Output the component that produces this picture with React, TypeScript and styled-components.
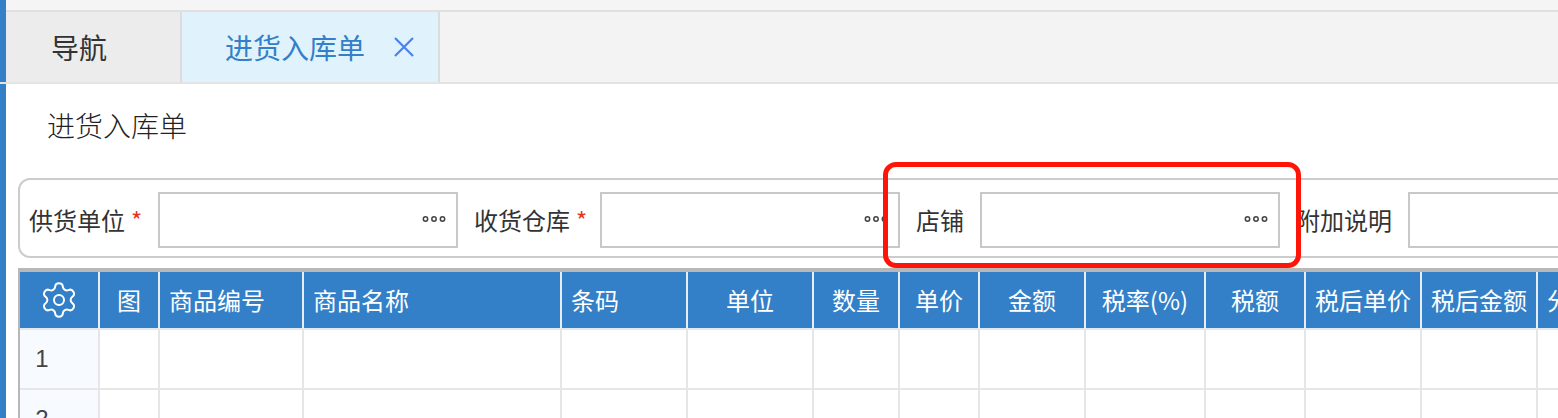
import React from 'react';
import styled, { createGlobalStyle } from 'styled-components';
import { Settings } from 'lucide-react';

const GlobalStyle = createGlobalStyle`
  html, body {
    margin: 0;
    padding: 0;
    background: #fff;
    overflow: hidden;
  }
  body {
    font-family: "Noto Sans CJK SC", "Liberation Sans", sans-serif;
    color: #333;
  }
  * { box-sizing: border-box; }
`;

const Page = styled.div`
  position: relative;
  width: 1558px;
  height: 418px;
  overflow: hidden;
`;

const HeaderArea = styled.header`
  display: flex;
  height: 82px;
`;

const Stripe = styled.div`
  flex: 0 0 6px;
  background: #3380c8;
`;

const HeaderColumn = styled.div`
  flex: 1;
  display: flex;
  flex-direction: column;
`;

const TopStrip = styled.div`
  height: 12px;
  background: #f5f5f5;
  border-bottom: 2px solid #e0e0e0;
`;

const TabRow = styled.nav`
  flex: 1;
  display: flex;
  background: #f3f3f3;
`;

const NavTab = styled.div`
  width: 176px;
  padding-left: 45px;
  display: flex;
  align-items: center;
  background: #ececec;
  border-right: 2px solid #dcdcdc;
  font-size: 28px;
  line-height: 1;
`;

const ActiveTab = styled.div`
  width: 258px;
  padding-left: 43px;
  display: flex;
  align-items: center;
  background: #e0f3fc;
  border-right: 2px solid #dcdcdc;
  color: #3380c8;
  font-size: 28px;
  line-height: 1;
`;

const CloseIcon = styled.svg`
  margin-left: 29px;
`;

const Divider = styled.div`
  height: 2px;
  background: #e4e4e4;
`;

const BodyArea = styled.div`
  display: flex;
  height: 334px;
`;

const Content = styled.main`
  flex: 1;
  min-width: 0;
  padding: 0 0 0 12px;
  overflow: hidden;
`;

const Title = styled.h1`
  margin: 0;
  height: 94px;
  padding: 24px 0 0 29px;
  font-size: 28px;
  line-height: 34px;
  font-weight: 300;
  color: #222;
`;

const FilterPanel = styled.section`
  width: 1600px;
  height: 80px;
  display: flex;
  align-items: center;
  padding: 4px 0 0 9px;
  border: 2px solid #ccc;
  border-radius: 12px;
`;

const Label = styled.label<{ $width: number }>`
  flex: 0 0 ${({ $width }) => $width}px;
  font-size: 24px;
  line-height: 1;
  white-space: nowrap;
`;

const Star = styled.span`
  margin-left: 6px;
  color: #e8341c;
`;

const Field = styled.div`
  flex: 0 0 300px;
  height: 56px;
  margin-right: 16px;
  padding-right: 10px;
  display: flex;
  align-items: center;
  justify-content: flex-end;
  border: 2px solid #c8c8c8;
  background: #fff;
`;

const Dots = styled.svg`
  margin-top: -2px;
`;

const MoreDots = () => (
  <Dots width="24" height="8" viewBox="0 0 24 8" fill="none" stroke="#444" strokeWidth="1.5">
    <circle cx="3.5" cy="4" r="2.2" />
    <circle cx="12" cy="4" r="2.2" />
    <circle cx="20.5" cy="4" r="2.2" />
  </Dots>
);

const Table = styled.div`
  width: 1600px;
  margin-top: 10px;
  border-top: 4px solid #b8b8b8;
  border-left: 2px solid #b8b8b8;
`;

const columns = [
  { label: '', width: 80, align: 'center' },
  { label: '图', width: 60, align: 'center' },
  { label: '商品编号', width: 144, align: 'left' },
  { label: '商品名称', width: 258, align: 'left' },
  { label: '条码', width: 126, align: 'left' },
  { label: '单位', width: 126, align: 'center' },
  { label: '数量', width: 86, align: 'center' },
  { label: '单价', width: 80, align: 'center' },
  { label: '金额', width: 106, align: 'center' },
  { label: '税率(%)', width: 120, align: 'center' },
  { label: '税额', width: 100, align: 'center' },
  { label: '税后单价', width: 116, align: 'center' },
  { label: '税后金额', width: 116, align: 'center' },
  { label: '分类', width: 120, align: 'left' },
];

const Row = styled.div<{ $height: number }>`
  display: flex;
  height: ${({ $height }) => $height}px;
`;

const HeadCell = styled.div<{ $width: number; $align: string }>`
  flex: 0 0 ${({ $width }) => $width}px;
  display: flex;
  align-items: center;
  justify-content: ${({ $align }) => ($align === 'left' ? 'flex-start' : 'center')};
  padding: ${({ $align }) => ($align === 'left' ? '0 0 0 9px' : '0')};
  background: #3380c8;
  border-right: 2px solid #e8eef5;
  border-bottom: 2px solid #e2e8ef;
  color: #fff;
  font-size: 24px;
  line-height: 1;
  white-space: nowrap;
`;

const Cell = styled.div<{ $width: number; $index?: boolean }>`
  flex: 0 0 ${({ $width }) => $width}px;
  display: flex;
  align-items: center;
  justify-content: center;
  background: ${({ $index }) => ($index ? '#f7fbff' : '#fff')};
  border-right: 2px solid #e6e6e6;
  border-bottom: 2px solid #e6e6e6;
  font-family: "Liberation Sans", sans-serif;
  font-size: 24px;
  line-height: 1;
  color: #444;
`;

const IndexNumber = styled.span`
  margin-right: 34px;
`;

const Highlight = styled.div`
  position: absolute;
  left: 883px;
  top: 162px;
  width: 418px;
  height: 106px;
  border: 5px solid #ff1408;
  border-radius: 13px;
`;

export default function App() {
  return (
    <Page>
      <GlobalStyle />
      <HeaderArea>
        <Stripe />
        <HeaderColumn>
          <TopStrip />
          <TabRow>
            <NavTab>导航</NavTab>
            <ActiveTab>
              进货入库单
              <CloseIcon width="20" height="20" viewBox="0 0 20 20" fill="none" stroke="#4a80f0" strokeWidth="2.2">
                <path d="M1 1L19 19M19 1L1 19" />
              </CloseIcon>
            </ActiveTab>
          </TabRow>
        </HeaderColumn>
      </HeaderArea>
      <Divider />
      <BodyArea>
        <Stripe />
        <Content>
          <Title>进货入库单</Title>
          <FilterPanel>
            <Label $width={129}>供货单位<Star>*</Star></Label>
            <Field><MoreDots /></Field>
            <Label $width={126}>收货仓库<Star>*</Star></Label>
            <Field><MoreDots /></Field>
            <Label $width={64}>店铺</Label>
            <Field><MoreDots /></Field>
            <Label $width={112}>附加说明</Label>
            <Field />
          </FilterPanel>
          <Table>
            <Row $height={58}>
              {columns.map((col, i) => (
                <HeadCell key={i} $width={col.width} $align={col.align}>
                  {i === 0 ? <Settings size={40} strokeWidth={1.2} /> : col.label}
                </HeadCell>
              ))}
            </Row>
            {[1, 2].map((n) => (
              <Row key={n} $height={60}>
                {columns.map((col, i) => (
                  <Cell key={i} $width={col.width} $index={i === 0}>
                    {i === 0 && <IndexNumber>{n}</IndexNumber>}
                  </Cell>
                ))}
              </Row>
            ))}
          </Table>
        </Content>
      </BodyArea>
      <Highlight />
    </Page>
  );
}
